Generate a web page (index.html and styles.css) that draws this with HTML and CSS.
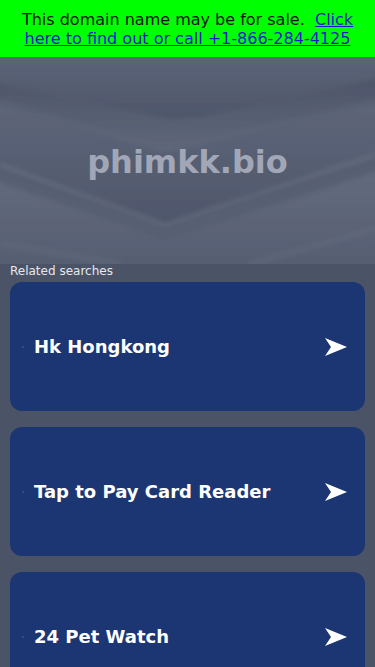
FILE: index.html
```html
<!DOCTYPE html>
<html>
<head>
<meta charset="utf-8">
<link rel="stylesheet" href="styles.css">
</head>
<body>
<div class="banner">This domain name may be for sale.&nbsp; <a href="#">Click here to find out or call +1-866-284-4125</a></div>
<div class="hero">
  <svg class="hero-bg" viewBox="0 0 375 207" preserveAspectRatio="none" width="375" height="207">
    <defs>
      <linearGradient id="g1" x1="0" y1="0" x2="0" y2="1">
        <stop offset="0" stop-color="#4d5569"/>
        <stop offset="1" stop-color="#5f6779"/>
      </linearGradient>
      <linearGradient id="g2" x1="0" y1="0" x2="0" y2="1">
        <stop offset="0" stop-color="#5e6679"/>
        <stop offset="1" stop-color="#4e566a"/>
      </linearGradient>
      <linearGradient id="g3" x1="0" y1="0" x2="0" y2="1">
        <stop offset="0" stop-color="#636b7e"/>
        <stop offset="1" stop-color="#555d70"/>
      </linearGradient>
      <filter id="soft" x="-5%" y="-5%" width="110%" height="110%">
        <feGaussianBlur stdDeviation="2.5"/>
      </filter>
    </defs>
    <rect width="375" height="207" fill="#4f576b"/>
    <g filter="url(#soft)">
      <polygon points="-10,-10 385,-10 385,20 200,60 170,62 -10,25" fill="url(#g2)"/>
      <polygon points="-10,25 170,62 200,60 385,20 385,45 165,95 -10,45" fill="url(#g1)"/>
      <polygon points="-10,45 165,95 385,45 385,100 165,170 -10,110" fill="url(#g2)"/>
      <polygon points="-10,110 165,170 385,100 385,112 165,182 -10,122" fill="#565e72"/>
      <polygon points="-10,122 165,182 385,112 385,217 -10,217" fill="url(#g3)"/>
      <polyline points="0,108 165,168 375,98" fill="none" stroke="#737b8e" stroke-width="2.5" opacity="0.7"/>
      <polyline points="0,44 165,94 375,44" fill="none" stroke="#687084" stroke-width="2" opacity="0.6"/>
      <polyline points="0,186 120,207" fill="none" stroke="#6c7487" stroke-width="3" opacity="0.5"/>
      <polyline points="250,207 375,172" fill="none" stroke="#6c7487" stroke-width="3" opacity="0.5"/>
    </g>
  </svg>
  <h1 class="title">phimkk.bio</h1>
</div>
<div class="related">Related searches</div>
<ul class="cards">
  <li class="card"><span class="dot"></span><span class="label">Hk Hongkong</span><svg class="arrow" viewBox="0 0 22 18" width="22" height="18"><path d="M0,0 L22,9 L0,18 L6,9 Z" fill="#fff"/></svg></li>
  <li class="card"><span class="dot"></span><span class="label">Tap to Pay Card Reader</span><svg class="arrow" viewBox="0 0 22 18" width="22" height="18"><path d="M0,0 L22,9 L0,18 L6,9 Z" fill="#fff"/></svg></li>
  <li class="card"><span class="dot"></span><span class="label">24 Pet Watch</span><svg class="arrow" viewBox="0 0 22 18" width="22" height="18"><path d="M0,0 L22,9 L0,18 L6,9 Z" fill="#fff"/></svg></li>
</ul>
</body>
</html>
```
FILE: styles.css
```css
* { box-sizing: border-box; }
html, body {
  margin: 0;
  padding: 0;
  background: #4b5366;
  font-family: "DejaVu Sans", sans-serif;
}
.banner {
  background: #00ff00;
  color: #111;
  font-size: 16px;
  line-height: 19px;
  text-align: center;
  padding: 10px 10px 9px;
}
.banner a {
  color: #1a1acc;
  text-decoration: underline;
}
.hero {
  position: relative;
  height: 207px;
  display: flex;
  align-items: center;
  justify-content: center;
  overflow: hidden;
}
.hero-bg {
  position: absolute;
  left: 0;
  top: 0;
  width: 100%;
  height: 100%;
}
.title {
  position: relative;
  margin: 0;
  font-size: 32px;
  font-weight: bold;
  color: #a2a7b7;
  padding-top: 3px;
}
.related {
  color: #e6e8ee;
  font-size: 12px;
  line-height: 14px;
  padding: 0 10px;
  margin-bottom: 4px;
}
.cards {
  list-style: none;
  margin: 0;
  padding: 0 10px;
  display: flex;
  flex-direction: column;
  gap: 16px;
}
.card {
  background: #1c3674;
  border-radius: 12px;
  height: 129px;
  display: flex;
  align-items: center;
  padding: 0 18px 0 12px;
}
.dot {
  width: 2px;
  height: 2px;
  background: #34497e;
  margin-right: 10px;
}
.label {
  flex: 1;
  color: #ffffff;
  font-size: 18px;
  font-weight: bold;
}
.arrow {
  display: block;
  flex: none;
}
```
